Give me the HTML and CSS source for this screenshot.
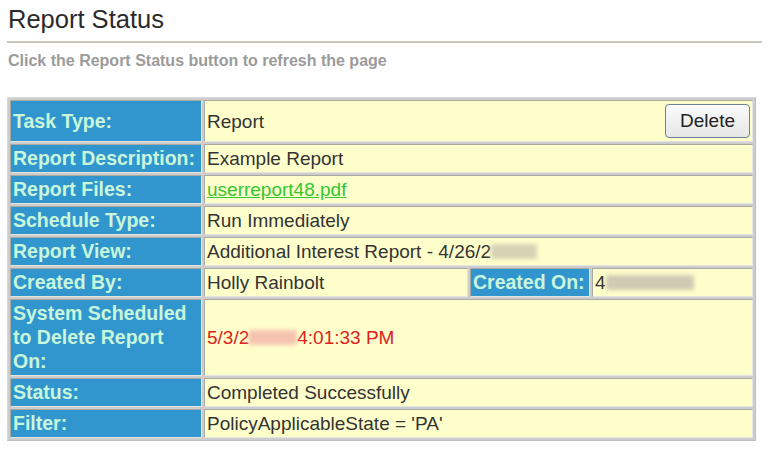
FILE: index.html
```html
<!DOCTYPE html>
<html lang="en">
<head>
  <meta charset="UTF-8">
  <meta name="viewport" content="width=device-width, initial-scale=1.0">
  <title>Report Status</title>
  <link rel="stylesheet" href="styles.css">
</head>
<body>

  <div class="page">
    <h1>Report Status</h1>
    <p class="hint">Click the Report Status button to refresh the page</p>

    <!-- Report details -->
    <table class="details">
      <colgroup>
        <col class="col-label">
        <col class="col-value">
        <col class="col-label2">
        <col class="col-value2">
      </colgroup>
      <tr>
        <th>Task Type:</th>
        <td colspan="3">
          <div class="task-row">
            <span>Report</span>
            <button class="btn">Delete</button>
          </div>
        </td>
      </tr>
      <tr>
        <th>Report Description:</th>
        <td colspan="3">Example Report</td>
      </tr>
      <tr>
        <th>Report Files:</th>
        <td colspan="3"><a href="#">userreport48.pdf</a></td>
      </tr>
      <tr>
        <th>Schedule Type:</th>
        <td colspan="3">Run Immediately</td>
      </tr>
      <tr>
        <th>Report View:</th>
        <td colspan="3">Additional Interest Report - 4/26/2<span class="masked masked-view"></span></td>
      </tr>
      <tr>
        <th>Created By:</th>
        <td>Holly Rainbolt</td>
        <th>Created On:</th>
        <td>4<span class="masked masked-created"></span></td>
      </tr>
      <tr>
        <th class="tall">System Scheduled<br>to Delete Report<br>On:</th>
        <td colspan="3" class="expire">5/3/2<span class="masked masked-red"></span>4:01:33 PM</td>
      </tr>
      <tr>
        <th>Status:</th>
        <td colspan="3">Completed Successfully</td>
      </tr>
      <tr>
        <th>Filter:</th>
        <td colspan="3">PolicyApplicableState = 'PA'</td>
      </tr>
    </table>
  </div>

</body>
</html>
```

FILE: styles.css
```css
/* Global Styles */
* {
  margin: 0;
  padding: 0;
  box-sizing: border-box;
}

body {
  font-family: 'Liberation Sans', Arial, sans-serif;
  background: #fff;
  color: #333;
}

.page {
  padding: 0 6px 0 7px;
}

h1 {
  font-size: 25.5px;
  font-weight: normal;
  line-height: 29px;
  color: #2a2a2a;
  padding: 5px 0 7px 1px;
  border-bottom: 2px solid #cac6b9;
}

.hint {
  margin-top: 9px;
  font-size: 16px;
  font-weight: bold;
  line-height: 18px;
  color: #9b9b9b;
  padding-left: 1px;
}

/* Details table */
.details {
  margin-top: 27px;
  width: 749px;
  table-layout: fixed;
  border-collapse: separate;
  border-spacing: 2px;
  background: #cdcdcd;
  border: 1px solid;
  border-color: #d8d8d8 #bdbdbd #bdbdbd #d8d8d8;
}

.col-label { width: 192px; }
.col-value { width: 264px; }
.col-label2 { width: 120px; }
.col-value2 { width: 161px; }

.details th,
.details td {
  border: 1px solid;
  border-color: #a9a9a2 #e4e4e0 #e4e4e0 #a9a9a2;
  padding: 2px 2px;
  line-height: 23px;
  text-align: left;
  white-space: nowrap;
  vertical-align: middle;
}

.details th {
  background: #3196cd;
  color: #c9f7dc;
  font-size: 19.5px;
  font-weight: bold;
}

.details td {
  background: #ffffcc;
  color: #333;
  font-size: 19px;
}

.details th.tall {
  padding: 1px 2px 2px;
  line-height: 24px;
}

.details td.expire {
  color: #e02020;
}

.details a {
  color: #33c633;
}

.task-row {
  display: flex;
  justify-content: space-between;
  align-items: center;
}

.btn {
  font-family: 'Liberation Sans', Arial, sans-serif;
  font-size: 19px;
  color: #222;
  width: 85px;
  height: 34px;
  margin: 1px 0;
  border: 1px solid #6d8196;
  border-radius: 4px;
  background: linear-gradient(#fbfbfb, #e6e6e6);
}

/* Blurred-out dates */
.masked {
  display: inline-block;
  height: 15px;
  vertical-align: -1px;
  filter: blur(2px);
}

.masked-view {
  width: 46px;
  background: #d6d2b4;
}

.masked-created {
  width: 88px;
  background: #cfcbb3;
}

.masked-red {
  width: 48px;
  background: #f6c2b0;
}
```
